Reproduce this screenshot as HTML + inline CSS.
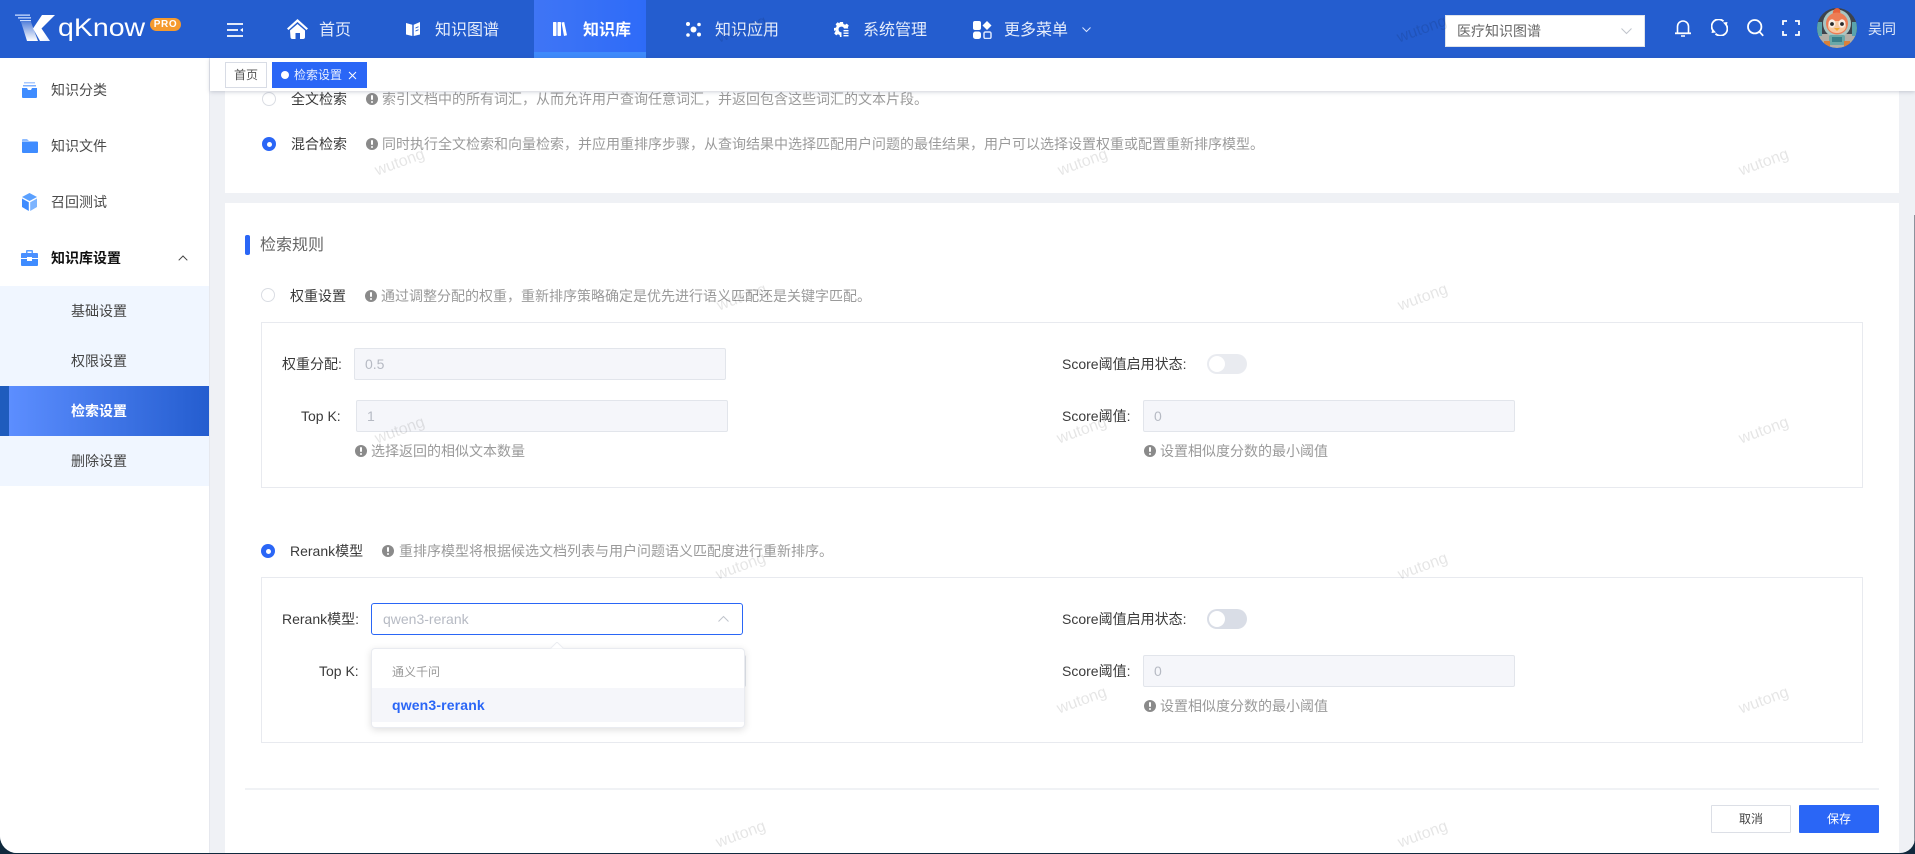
<!DOCTYPE html>
<html lang="zh-CN">
<head>
<meta charset="utf-8">
<title>qKnow 检索设置</title>
<style>
*{box-sizing:border-box;margin:0;padding:0}
html,body{width:1915px;height:854px;overflow:hidden;background:#10293d}
body{font-family:"Liberation Sans","Noto Sans CJK SC",sans-serif;font-size:14px;color:#333;position:relative}
#win{position:absolute;left:0;top:0;width:1915px;height:853px;background:#eff1f5;border-radius:0 0 15px 17px;overflow:hidden}
.a{position:absolute;white-space:nowrap}
.t{position:absolute;white-space:nowrap;height:20px;line-height:20px}
#hd{position:absolute;left:0;top:0;width:1915px;height:58px;background:#245dcf}
.nv{color:#e6edfb;font-size:16px;height:24px;line-height:24px;top:19px}
#act{position:absolute;left:534px;top:0;width:112px;height:58px;background:linear-gradient(90deg,#3f75f5,#2e6bf8)}
#act i{position:absolute;left:0;bottom:0;width:100%;height:6px;background:#3f8afb}
#sel{position:absolute;left:1445px;top:15px;width:200px;height:32px;background:#fff;border:1px solid #dfe3ea}
#sb{position:absolute;left:0;top:58px;width:210px;height:795px;background:#fff;border-right:1px solid #e6e8ee}
.si{font-size:14px;color:#4a4a4a;left:51px}
#sub{position:absolute;left:0;top:286px;width:209px;height:200px;background:#f0f6ff}
.sc{left:71px;color:#444;font-size:14px}
#sa{position:absolute;left:0;top:386px;width:209px;height:50px;background:linear-gradient(90deg,#5c8eff 9px,#245dcf)}
#sa i{position:absolute;left:0;top:0;width:9px;height:50px;background:#1f5cbd}
#tb{position:absolute;left:210px;top:58px;width:1705px;height:33px;background:#fff;box-shadow:0 1px 4px rgba(60,70,100,.25);z-index:3}
.card{position:absolute;left:225px;width:1674px;background:#fff}
.lab{color:#3a3a3a;font-size:14px}
.hint{color:#9a9a9a;font-size:14px}
.note{position:absolute;width:12px;height:12px;border-radius:50%;background:#8a8a8a}
.note:after{content:"";position:absolute;left:5px;top:2px;width:2px;height:5px;background:#fff;border-radius:1px}
.note:before{content:"";position:absolute;left:5px;top:8px;width:2px;height:2px;background:#fff;border-radius:1px}
.rd{position:absolute;width:14px;height:14px;border-radius:50%;border:1px solid #dadde3;background:#fff}
.rd.on{background:#2a66f6;border:0}
.rd.on:after{content:"";position:absolute;left:4.5px;top:4.5px;width:5px;height:5px;border-radius:50%;background:#fff}
.box{position:absolute;left:261px;width:1602px;background:#fff;border:1px solid #e8eaef}
.inp{position:absolute;height:32px;background:#f5f6fa;border:1px solid #e2e5eb;border-radius:2px;color:#b6bac3;line-height:30px;padding-left:10px;font-size:14px}
.sw{position:absolute;width:40px;height:20px;border-radius:10px;background:#e9ebf0}
.sw:after{content:"";position:absolute;left:2px;top:2px;width:16px;height:16px;border-radius:50%;background:#fff}
.sw.d{background:#d9dde6}
#dd{position:absolute;left:371px;top:648px;width:374px;height:80px;background:#fff;border:1px solid #e9ebf0;border-radius:4px;box-shadow:0 2px 8px rgba(0,0,0,.13);z-index:2}
#dd .opt{position:absolute;left:0;top:39px;width:372px;height:34px;background:#f5f6fa}
.btn{position:absolute;top:805px;width:80px;height:28px;line-height:26px;text-align:center;font-size:12px;border-radius:1px}
.wm{position:absolute;font-family:"Liberation Sans",sans-serif;font-size:16px;color:rgba(0,0,0,.1);transform:rotate(-20deg);width:60px;height:20px;line-height:20px;text-align:center;z-index:9;pointer-events:none}
svg{position:absolute;display:block}
</style>
</head>
<body>
<div id="win">

<div id="hd">
  <!-- logo -->
  <svg style="left:14px;top:13px" width="44" height="30" viewBox="0 0 44 30">
    <defs>
      <linearGradient id="lg" x1="0" y1="0" x2="1" y2="1"><stop offset="0" stop-color="#fff"/><stop offset=".6" stop-color="#fff"/><stop offset="1" stop-color="#dbe7ff"/></linearGradient>
      <linearGradient id="lg2" x1="0" y1="0" x2="0" y2="1"><stop offset="0" stop-color="#fff" stop-opacity=".25"/><stop offset="1" stop-color="#fff"/></linearGradient>
    </defs>
    <path d="M1 1.500h15v1.300H1zM4 4.200h13v1.300H4zM6 7h11v1.300H6z" fill="#cfe0ff"/>
    <path d="M7 9h10l7 19H13z" fill="url(#lg2)"/>
    <path d="M28 2h13L27.500 15.500 36 28H26l-7-12.500z" fill="url(#lg)"/>
  </svg>
  <div class="a" style="left:58px;top:13px;height:30px;line-height:30px;font-size:25px;color:#fff;transform:scaleX(1.14);transform-origin:0 50%">qKnow</div>
  <div class="a" style="left:150px;top:18px;width:31px;height:13px;border-radius:7px;background:#f59a2e;color:#fff;font-size:10px;font-weight:bold;line-height:13px;text-align:center;letter-spacing:.6px">PRO</div>

  <svg style="left:227px;top:23px" width="17" height="14" viewBox="0 0 17 14" fill="none" stroke="#fff" stroke-width="1.800"><path d="M0 1h16M0 7h11M0 13h16"/><path d="M16 5l-3 2 3 2z" fill="#fff" stroke="none"/></svg>

  <svg style="left:287px;top:19px" width="21" height="20" viewBox="0 0 21 20"><path d="M10.500 0L0 9.500l1.500 1.500 9-8 9 8 1.500-1.500z" fill="#fff"/><path d="M3 11.500l7.500-6.500 7.500 6.500V18a2 2 0 0 1-2 2h-3v-6H8.500v6h-3a2 2 0 0 1-2-2z" fill="#fff"/></svg>
  <div class="a nv" style="left:319px">首页</div>

  <svg style="left:406px;top:22px" width="14" height="14" viewBox="0 0 14 14" fill="#fff"><path d="M0 1l6.300 1.800V14L0 12.500z"/><path d="M7.700 2.800L14 0v12.500L7.700 14z"/><path d="M9.500 5.500l3-1.200v1l-3 1.200zM9.500 8.500l3-1.200v1l-3 1.200z" fill="#245dcf"/></svg>
  <div class="a nv" style="left:435px">知识图谱</div>

  <div id="act"><i></i></div>
  <svg style="left:553px;top:22px" width="14" height="14" viewBox="0 0 14 14" fill="#fff"><rect x="0" y="0" width="3.500" height="14" rx=".7"/><rect x="4.500" y="0" width="3.500" height="14" rx=".7"/><path d="M8.500.500l2.700-.5L14 13.300l-3 .7z"/></svg>
  <div class="a nv" style="left:583px;color:#fff;font-weight:bold">知识库</div>

  <svg style="left:686px;top:22px" width="15" height="15" viewBox="0 0 15 15" fill="#fff"><circle cx="2" cy="2" r="2"/><circle cx="13" cy="2.500" r="1.800"/><circle cx="2" cy="13" r="1.800"/><circle cx="13" cy="12.500" r="2"/><circle cx="7.500" cy="7.500" r="3"/></svg>
  <div class="a nv" style="left:715px">知识应用</div>

  <svg style="left:834px;top:22px" width="15" height="15" viewBox="0 0 15 15" fill="#fff"><path d="M6 0h3l.4 2 1.700.7L12.800 1.600l2 2-1 1.700.5 1.200H10a2.800 2.800 0 1 0-2.500 3.800V15H6l-.4-2-1.700-.7-1.700 1.100-2-2 1.100-1.700L1.600 8.100 0 9V6l2-.4.700-1.700L1.600 2.200l2-2 1.700 1.100z"/><path d="M9.500 8h5v1.400h-5zM9.500 10.500h5v1.400h-5zM9.500 13h5v1.400h-5z"/></svg>
  <div class="a nv" style="left:863px">系统管理</div>

  <svg style="left:973px;top:21px" width="19" height="18" viewBox="0 0 19 18"><rect x="0" y="0" width="8" height="9" rx="2" fill="#fff"/><path d="M14 0l4.500 4.500L14 9 9.500 4.500z" fill="#fff"/><rect x="0" y="10.500" width="8" height="7.500" rx="2.500" fill="#fff"/><rect x="11" y="11" width="7" height="6.500" rx="1.500" fill="none" stroke="#dbe6ff" stroke-width="1.500"/></svg>
  <div class="a nv" style="left:1004px">更多菜单</div>
  <svg style="left:1082px;top:27px" width="9" height="6" viewBox="0 0 9 6" fill="none" stroke="#dbe6ff" stroke-width="1"><path d="M.5.500l4 4 4-4"/></svg>

  <div id="sel">
    <div class="a" style="left:11px;top:5px;height:20px;line-height:20px;font-size:14px;color:#666">医疗知识图谱</div>
    <svg style="left:175px;top:12px" width="11" height="7" viewBox="0 0 11 7" fill="none" stroke="#c0c4cc" stroke-width="1"><path d="M.5.500l5 5 5-5"/></svg>
  </div>

  <svg style="left:1674px;top:19px" width="18" height="18" viewBox="0 0 18 18" fill="none" stroke="#fff" stroke-width="1.600"><path d="M3.500 14V7.500a5.500 5.500 0 0 1 11 0V14"/><path d="M1 14.300h16" stroke-width="1.800"/><path d="M7 17h4" stroke-width="1.500"/></svg>
  <svg style="left:1711px;top:19px" width="17" height="17" viewBox="0 0 17 17" fill="none" stroke="#fff" stroke-width="1.800"><path d="M2 11.500A7 7 0 0 1 12.500 2.300"/><path d="M15 5.500A7 7 0 0 1 4.500 14.700"/><path d="M15.500 7.500L12 3.500l4.500-.5z" fill="#fff" stroke="none"/><path d="M1.500 9.500L5 13.500l-4.500.5z" fill="#fff" stroke="none"/></svg>
  <svg style="left:1747px;top:19px" width="17" height="18" viewBox="0 0 17 18" fill="none" stroke="#fff" stroke-width="1.800"><circle cx="7.700" cy="7.700" r="6.700"/><path d="M12.500 12.800l3.700 4"/></svg>
  <svg style="left:1782px;top:20px" width="18" height="16" viewBox="0 0 18 16" fill="none" stroke="#fff" stroke-width="1.800"><path d="M1 5V1h4M13 1h4v4M17 11v4h-4M5 15H1v-4"/></svg>

  <svg style="left:1817px;top:8px" width="40" height="40" viewBox="0 0 40 40">
    <defs><clipPath id="cav"><circle cx="20" cy="20" r="20"/></clipPath></defs>
    <g clip-path="url(#cav)">
      <rect width="40" height="40" fill="#3d434c"/>
      <rect x="0" y="26" width="40" height="14" fill="#b3aea6"/>
      <rect x="0" y="14" width="5" height="14" fill="#5aa3ab"/>
      <rect x="35" y="14" width="5" height="14" fill="#5aa3ab"/>
      <circle cx="20" cy="15.500" r="14" fill="#a9c6c2"/>
      <path d="M16 6c-1-3 2-6 4-6 3 0 4 3 3 6z" fill="#e8623a"/>
      <circle cx="20" cy="15.500" r="11" fill="#ed7d55"/>
      <path d="M11 18c0-3 3-5 5-5h8c2 0 5 2 5 5 0 4-4 7-9 7s-9-3-9-7z" fill="#f7c7a0"/>
      <ellipse cx="15" cy="15.500" rx="3.500" ry="4.300" fill="#f9efe6"/>
      <ellipse cx="25" cy="15.500" rx="3.500" ry="4.300" fill="#f9efe6"/>
      <circle cx="15" cy="16" r="1.900" fill="#2a2a2a"/>
      <circle cx="25" cy="16" r="1.900" fill="#2a2a2a"/>
      <path d="M17 20h6l-3 3z" fill="#f1ad36"/>
      <rect x="12" y="27" width="16" height="10" rx="2" fill="#6aa8a8"/>
      <rect x="15" y="29" width="10" height="5" fill="#38808a"/>
      <rect x="7" y="33" width="6" height="7" fill="#d9803a"/>
      <rect x="27" y="33" width="6" height="7" fill="#d9803a"/>
    </g>
  </svg>
  <div class="a" style="left:1868px;top:19px;height:20px;line-height:20px;font-size:14px;color:#e6edfb">吴同</div>
</div>

<div id="sb"></div>
<!-- sidebar icons -->
<svg style="left:22px;top:82px" width="15" height="16" viewBox="0 0 15 16"><path d="M2 0h11v1.500H2z" fill="#a9c9ff"/><path d="M1 3h13v1.500H1z" fill="#7fb0ff"/><path d="M0 6h5l1 2h3l1-2h5v9a1 1 0 0 1-1 1H1a1 1 0 0 1-1-1z" fill="#3f8cff"/></svg>
<div class="t si" style="top:80px">知识分类</div>
<svg style="left:21.500px;top:138px" width="16" height="15" viewBox="0 0 16 15"><path d="M0 2a1 1 0 0 1 1-1h4l2 2h-7z" fill="#8fbcff"/><path d="M0 3.500h15a1 1 0 0 1 1 1V14a1 1 0 0 1-1 1H1a1 1 0 0 1-1-1z" fill="#3f8cff"/></svg>
<div class="t si" style="top:136px">知识文件</div>
<svg style="left:22px;top:193px" width="15" height="18" viewBox="0 0 15 18"><path d="M7.500 0L15 4 7.500 8 0 4z" fill="#5aa0ff"/><path d="M0 5.500l6.800 3.800V18L0 14z" fill="#3f8cff"/><path d="M15 5.500L8.200 9.300V18L15 14z" fill="#7db4ff"/></svg>
<div class="t si" style="top:192px">召回测试</div>
<svg style="left:21px;top:250px" width="17" height="16" viewBox="0 0 17 16"><path d="M5 3V1a1 1 0 0 1 1-1h5a1 1 0 0 1 1 1v2h-1.500V1.500h-4V3z" fill="#5a9cff"/><path d="M0 4a1 1 0 0 1 1-1h15a1 1 0 0 1 1 1v4h-6v-1H6v1H0z" fill="#4a90ff"/><path d="M0 9h6v2h5V9h6v6a1 1 0 0 1-1 1H1a1 1 0 0 1-1-1z" fill="#3f8cff"/><rect x="7" y="7.500" width="3" height="3" fill="#fff"/></svg>
<div class="t si" style="top:248px;color:#111;font-weight:bold">知识库设置</div>
<svg style="left:178px;top:255px" width="10" height="6" viewBox="0 0 10 6" fill="none" stroke="#444" stroke-width="1"><path d="M.7 5.300L5 1l4.300 4.300"/></svg>
<div id="sub"></div>
<div id="sa"><i></i></div>
<div class="t sc" style="top:301px">基础设置</div>
<div class="t sc" style="top:351px">权限设置</div>
<div class="t sc" style="top:401px;color:#fff;font-weight:bold">检索设置</div>
<div class="t sc" style="top:451px">删除设置</div>

<!-- tabs -->
<div id="tb">
  <div class="a" style="left:15px;top:4px;width:42px;height:26px;border:1px solid #d8dce5;background:#fff;color:#555;font-size:12px;line-height:24px;text-align:center">首页</div>
  <div class="a" style="left:62px;top:4px;width:95px;height:26px;background:#2a66f6;color:#e9f0ff;font-size:12px;line-height:26px">
    <span class="a" style="left:9px;top:9px;width:8px;height:8px;border-radius:50%;background:#fff"></span>
    <span class="a" style="left:22px;top:0">检索设置</span>
    <svg style="left:76px;top:8.500px" width="9" height="9" viewBox="0 0 9 9" fill="none" stroke="#fff" stroke-width="1"><path d="M1 1l7 7M8 1L1 8"/></svg>
  </div>
</div>

<!-- card 1 -->
<div class="card" style="top:91px;height:102px"></div>
<div class="rd" style="left:262px;top:92px"></div>
<div class="t lab" style="left:291px;top:89px">全文检索</div>
<div class="note" style="left:366px;top:93px"></div>
<div class="t hint" style="left:382px;top:89px">索引文档中的所有词汇，从而允许用户查询任意词汇，并返回包含这些词汇的文本片段。</div>
<div class="rd on" style="left:262px;top:137px"></div>
<div class="t lab" style="left:291px;top:134px">混合检索</div>
<div class="note" style="left:366px;top:138px"></div>
<div class="t hint" style="left:382px;top:134px">同时执行全文检索和向量检索，并应用重排序步骤，从查询结果中选择匹配用户问题的最佳结果，用户可以选择设置权重或配置重新排序模型。</div>

<!-- card 2 -->
<div class="card" style="top:203px;height:650px"></div>
<div class="a" style="left:245px;top:235px;width:5px;height:20px;border-radius:2px;background:#2a66f6"></div>
<div class="a" style="left:260px;top:235px;height:22px;line-height:22px;font-size:16px;color:#666">检索规则</div>

<div class="rd" style="left:261px;top:288px"></div>
<div class="t lab" style="left:290px;top:286px">权重设置</div>
<div class="note" style="left:365px;top:290px"></div>
<div class="t hint" style="left:381px;top:286px">通过调整分配的权重，重新排序策略确定是优先进行语义匹配还是关键字匹配。</div>

<div class="box" style="top:322px;height:166px"></div>
<div class="t lab" style="left:282px;top:354px">权重分配:</div>
<div class="inp" style="left:354px;top:348px;width:372px">0.5</div>
<div class="t lab" style="left:301px;top:406px">Top K:</div>
<div class="inp" style="left:356px;top:400px;width:372px">1</div>
<div class="note" style="left:355px;top:445px"></div>
<div class="t hint" style="left:371px;top:441px">选择返回的相似文本数量</div>
<div class="t lab" style="left:1062px;top:354px">Score阈值启用状态:</div>
<div class="sw" style="left:1207px;top:354px"></div>
<div class="t lab" style="left:1062px;top:406px">Score阈值:</div>
<div class="inp" style="left:1143px;top:400px;width:372px">0</div>
<div class="note" style="left:1144px;top:445px"></div>
<div class="t hint" style="left:1160px;top:441px">设置相似度分数的最小阈值</div>

<div class="rd on" style="left:261px;top:544px"></div>
<div class="t lab" style="left:290px;top:541px">Rerank模型</div>
<div class="note" style="left:382px;top:545px"></div>
<div class="t hint" style="left:399px;top:541px">重排序模型将根据候选文档列表与用户问题语义匹配度进行重新排序。</div>

<div class="box" style="top:577px;height:166px"></div>
<div class="t lab" style="left:282px;top:609px">Rerank模型:</div>
<div class="a" style="left:371px;top:603px;width:372px;height:32px;background:#fff;border:1px solid #2a66f6;border-radius:3px;color:#b6bac3;line-height:30px;padding-left:11px">qwen3-rerank</div>
<svg style="left:718px;top:615px" width="11" height="7" viewBox="0 0 11 7" fill="none" stroke="#c0c4cc" stroke-width="1"><path d="M.5 6.500l5-5 5 5"/></svg>
<div class="t lab" style="left:319px;top:661px">Top K:</div>
<div class="inp" style="left:371px;top:655px;width:375px"></div>
<svg style="left:550px;top:642px;z-index:3" width="14" height="7" viewBox="0 0 14 7"><path d="M0 7L7 0l7 7z" fill="#fff" stroke="#ebedf1" stroke-width="1"/><path d="M1 7h12v1H1z" fill="#fff"/></svg>
<div id="dd">
  <div class="a" style="left:20px;top:14px;height:18px;line-height:18px;font-size:12px;color:#9a9a9a">通义千问</div>
  <div class="opt"></div>
  <div class="a" style="left:20px;top:46px;height:20px;line-height:20px;font-size:14px;font-weight:bold;color:#2a66f6;letter-spacing:.15px">qwen3-rerank</div>
</div>
<div class="t lab" style="left:1062px;top:609px">Score阈值启用状态:</div>
<div class="sw d" style="left:1207px;top:609px"></div>
<div class="t lab" style="left:1062px;top:661px">Score阈值:</div>
<div class="inp" style="left:1143px;top:655px;width:372px">0</div>
<div class="note" style="left:1144px;top:700px"></div>
<div class="t hint" style="left:1160px;top:696px">设置相似度分数的最小阈值</div>

<div class="a" style="left:245px;top:788px;width:1634px;height:2px;background:#f0f2f5"></div>
<div class="btn" style="left:1711px;background:#fff;border:1px solid #dcdfe6;color:#444">取消</div>
<div class="btn" style="left:1799px;background:#2a66f6;color:#fff;line-height:28px">保存</div>

<!-- scrollbar hint -->
<div class="a" style="left:1914px;top:215px;width:1px;height:638px;background:#8d929c"></div>

<!-- watermarks -->
<div class="wm" style="left:712px;top:20px">wutong</div>
<div class="wm" style="left:1392px;top:20px">wutong</div>
<div class="wm" style="left:370px;top:153px">wutong</div>
<div class="wm" style="left:1053px;top:153px">wutong</div>
<div class="wm" style="left:1734px;top:153px">wutong</div>
<div class="wm" style="left:712px;top:288px">wutong</div>
<div class="wm" style="left:1393px;top:288px">wutong</div>
<div class="wm" style="left:370px;top:421px">wutong</div>
<div class="wm" style="left:1052px;top:421px">wutong</div>
<div class="wm" style="left:1734px;top:421px">wutong</div>
<div class="wm" style="left:711px;top:557px">wutong</div>
<div class="wm" style="left:1393px;top:557px">wutong</div>
<div class="wm" style="left:1052px;top:691px">wutong</div>
<div class="wm" style="left:1734px;top:691px">wutong</div>
<div class="wm" style="left:711px;top:825px">wutong</div>
<div class="wm" style="left:1393px;top:825px">wutong</div>
</div>
</body>
</html>
